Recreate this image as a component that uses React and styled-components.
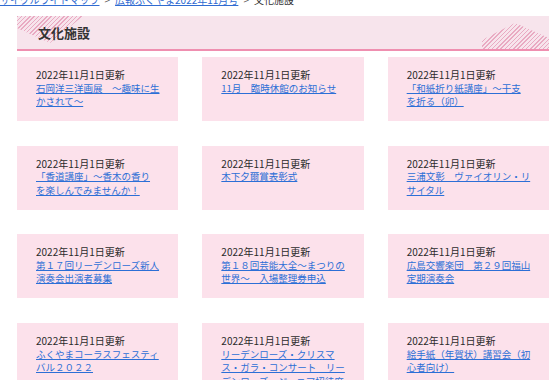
import React from 'react';
import styled, { createGlobalStyle } from 'styled-components';

const GlobalStyle = createGlobalStyle`
  html, body {
    margin: 0;
    padding: 0;
    background: #fff;
    overflow: hidden;
  }
  body {
    font-family: "Noto Sans CJK JP", "Noto Sans", sans-serif;
    color: #333;
  }
`;

const Page = styled.div`
  padding: 0 5px 0 17px;
  width: 532px;
`;

const Breadcrumb = styled.div`
  margin: -6px 0 0 -17px;
  font-size: 10px;
  line-height: 12px;
  white-space: nowrap;
  color: #333;
`;

const Crumb = styled.a`
  color: #2f6bd1;
  text-decoration: underline;
`;

const Sep = styled.span`
  margin: 0 5px;
  color: #555;
`;

const Heading = styled.h2`
  position: relative;
  overflow: hidden;
  margin: 10px 0 0;
  height: 33px;
  display: flex;
  align-items: center;
  padding-left: 21px;
  background: #f7e4ec;
  border-bottom: 2px solid #ef8fb0;
  font-size: 13px;
  font-weight: bold;
  color: #333;

  &::before,
  &::after {
    content: "";
    position: absolute;
    top: 0;
    height: 100%;
    background: repeating-linear-gradient(
      135deg,
      #e9aac2 0px,
      #e9aac2 1px,
      transparent 1px,
      transparent 3px
    );
  }
  &::before {
    left: 0;
    width: 66px;
    clip-path: polygon(0 0, 66px 0, 33px 27px, 0 12px);
  }
  &::after {
    right: 0;
    width: 67px;
    clip-path: polygon(0 100%, 0 24px, 33px 7px, 67px 22px, 67px 100%);
  }
`;

const HeadingText = styled.span`
  position: relative;
  z-index: 1;
`;

const Grid = styled.div`
  display: grid;
  grid-template-columns: repeat(3, 1fr);
  column-gap: 24px;
  row-gap: 24.7px;
  margin-top: 6px;
`;

const Card = styled.div`
  min-height: 64px;
  box-sizing: border-box;
  padding: 11px 16px 0 19px;
  background: #fce1eb;
  font-size: 9.5px;
  line-height: 13.5px;
`;

const Date = styled.div`
  font-size: 10px;
  color: #2b2b2b;
`;

const Title = styled.a`
  color: #2c6fd6;
  text-decoration: underline;
`;

const items = [
  ['石岡洋三洋画展　～趣味に生', 'かされて～'],
  ['11月　臨時休館のお知らせ'],
  ['「和紙折り紙講座」～干支', 'を折る（卯）'],
  ['「香道講座」～香木の香り', 'を楽しんでみませんか！'],
  ['木下夕爾賞表彰式'],
  ['三浦文彰　ヴァイオリン・リ', 'サイタル'],
  ['第１７回リーデンローズ新人', '演奏会出演者募集'],
  ['第１８回芸能大全～まつりの', '世界～　入場整理券申込'],
  ['広島交響楽団　第２９回福山', '定期演奏会'],
  ['ふくやまコーラスフェスティ', 'バル２０２２'],
  ['リーデンローズ・クリスマ', 'ス・ガラ・コンサート　リー', 'デンローズ・ジュニア招待席'],
  ['絵手紙（年賀状）講習会（初', '心者向け）'],
];

const App = () => {
  return (
    <Page>
      <GlobalStyle />
      <Breadcrumb>
        <Crumb href="#">サイクルライドマップ</Crumb>
        <Sep>&gt;</Sep>
        <Crumb href="#">広報ふくやま2022年11月号</Crumb>
        <Sep>&gt;</Sep>
        文化施設
      </Breadcrumb>
      <Heading>
        <HeadingText>文化施設</HeadingText>
      </Heading>
      <Grid>
        {items.map((lines, i) => (
          <Card key={i}>
            <Date>2022年11月1日更新</Date>
            <Title href="#">
              {lines.map((l, j) => (
                <React.Fragment key={j}>
                  {j > 0 && <br />}
                  {l}
                </React.Fragment>
              ))}
            </Title>
          </Card>
        ))}
      </Grid>
    </Page>
  );
};

export default App;
